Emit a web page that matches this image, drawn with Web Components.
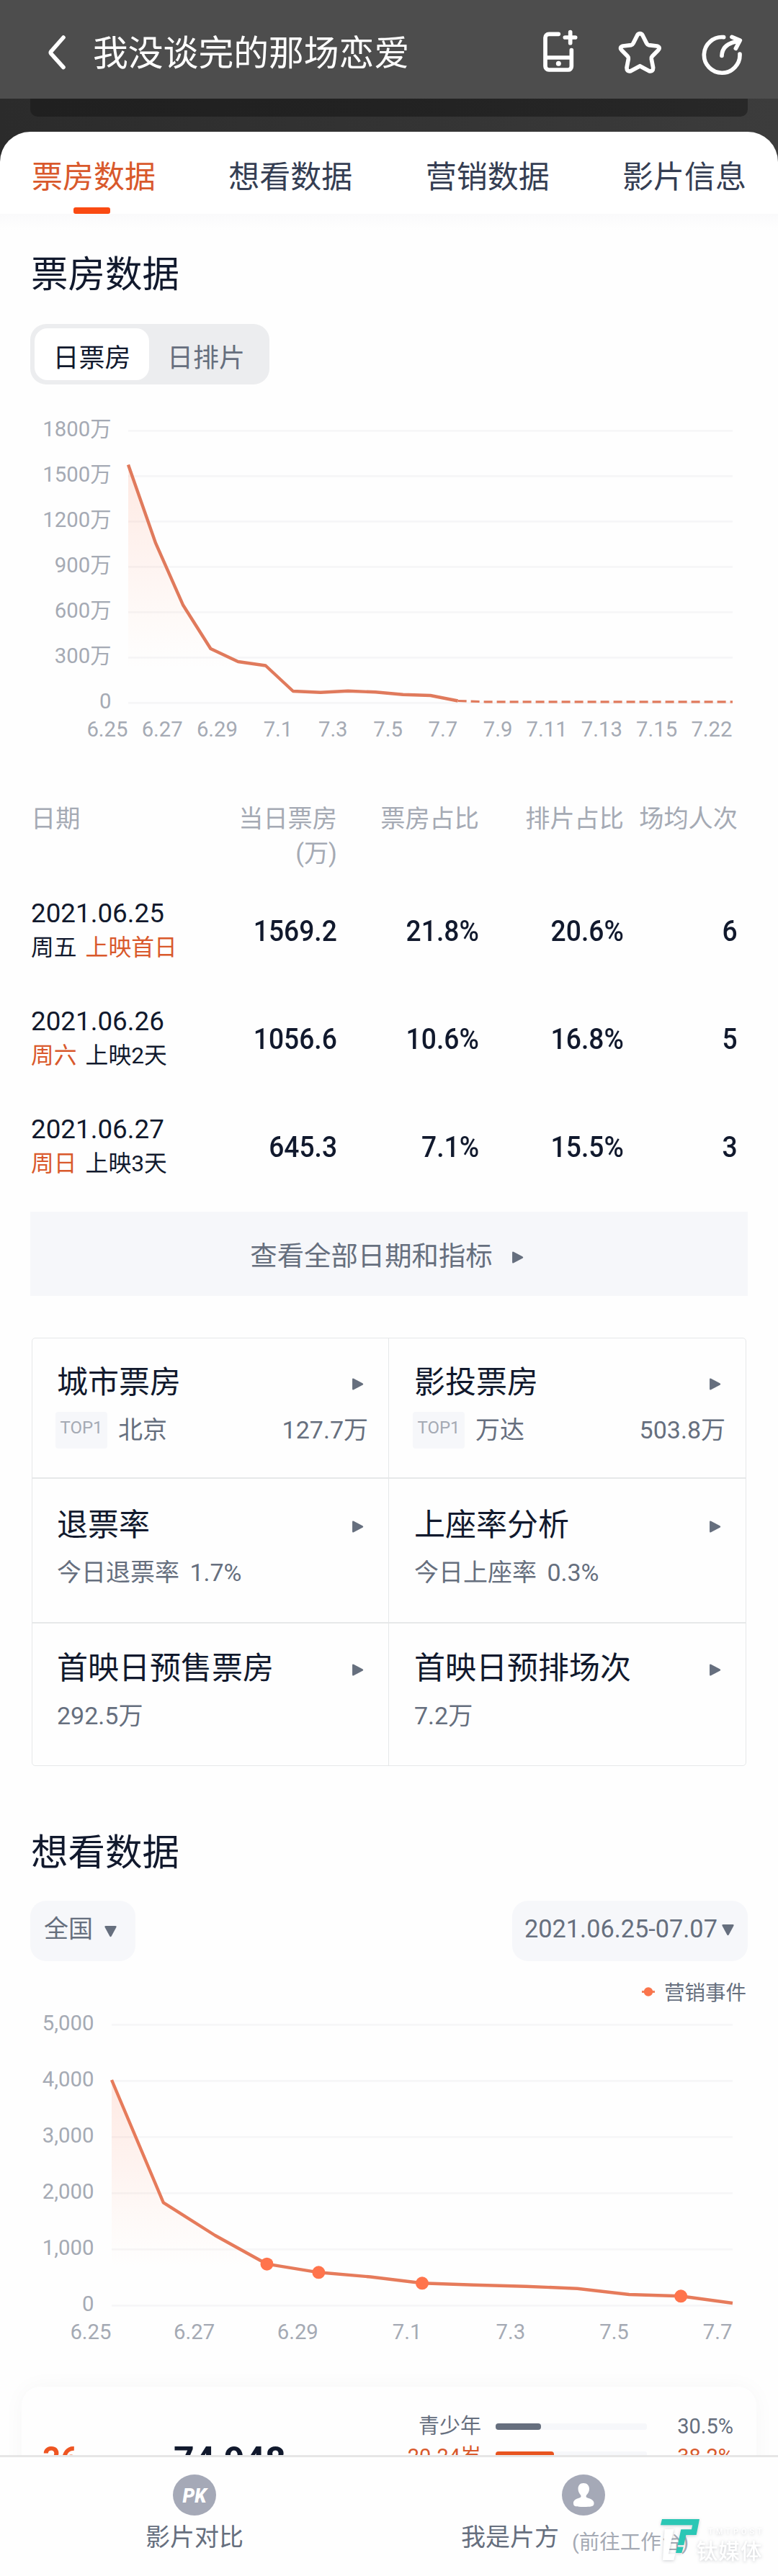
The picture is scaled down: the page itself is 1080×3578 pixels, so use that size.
<!DOCTYPE html>
<html lang="zh-CN">
<head>
<meta charset="utf-8">
<title>我没谈完的那场恋爱</title>
<style>
html,body{margin:0;padding:0}
body{width:1080px;background:#fefefe;font-family:Roboto,"Noto Sans CJK SC",sans-serif;color:#11192d;
--ink:#11192d;--sub:#666f7e;--mute:#a5aab4;--accent:#d9592c;--line:#e6e8e9;--soft:#f6f7fa}
</style>
</head>
<body>
<film-page></film-page>
<script>
const define=(name,html)=>customElements.define(name,class extends HTMLElement{
  connectedCallback(){
    if(this.shadowRoot)return;
    const t=document.createElement('template');
    t.innerHTML=typeof html==='function'?html(this):html;
    this.attachShadow({mode:'open'}).append(t.content.cloneNode(true));
  }
});

define('app-header',`<style>
:host{display:flex;height:137px;box-sizing:border-box;background:#4d4d4d;color:#fff;padding:40px 48px 0 64px}
.back{margin-top:7px}
h1{margin:1px 0 0 35px;font-weight:400;font-size:48.800px;line-height:68px;flex:1;white-space:nowrap}
.icons{display:flex;gap:52px;align-items:flex-start}
svg{display:block;fill:none;stroke:#fff;stroke-linecap:round;stroke-linejoin:round}
</style>
<svg class="back" width="30" height="52" viewBox="0 0 30 52" stroke-width="5.6"><path d="M24 5 7 24.3Q5.6 26 7 27.7L24 46.500"/></svg>
<h1><slot></slot></h1>
<div class="icons">
<svg width="52" height="62" viewBox="36 30 156 186" stroke-width="17"><path d="M106 52H66a15 15 0 0 0-15 15V186a15 15 0 0 0 15 15H146a14 14 0 0 0 14-14V119M51 150H160M155 44V89M133 66H176"/><circle cx="106" cy="175" r="10.500" fill="#fff" stroke="none"/></svg>
<svg width="64" height="64" viewBox="348 30 192 192" stroke-width="17"><path d="M445 50Q452 50 456 57L473 91Q476 97 482 98L516 102Q532 107 521 119L496 145Q492 149 493 156L500 192Q500 210 484 206L445 185 406 206Q390 210 390 192L397 156Q398 149 394 145L369 119Q358 107 374 102L408 98Q414 97 417 91L434 57Q438 50 445 50Z"/></svg>
<svg width="60" height="62" viewBox="696 42 180 186" stroke-width="17" style="margin-top:4px"><path d="M794 65A74.500 74.500 0 1 0 861 135M786 142Q788 92 852 82M828 64 862 78 844 112"/></svg>
</div>`);

define('hero-strip',`<style>
:host{display:block;height:46px;padding:0 42px}
div{height:25px;border-radius:0 0 10px 10px;background:linear-gradient(90deg,#202020,#222 50%,#282828)}
</style><div></div>`);

define('tab-bar',`<style>
:host{display:block;height:114px;box-sizing:border-box;padding:30px 44px 0;border-radius:42px 42px 0 0;background:#fff}
nav{display:flex;justify-content:space-between;font-size:43px;line-height:66px;color:#353e53}
span{display:flex;flex-direction:column;align-items:center;gap:9px}
.on{color:var(--accent)}
.on i{width:51px;height:9px;margin-right:5px;border-radius:3px;background:#fa4a12}
</style><nav><span class="on">票房数据<i></i></span><span>想看数据</span><span>营销数据</span><span>影片信息</span></nav>`);

define('section-title',`<style>
:host{display:block;padding-left:43px;font-size:51.500px;line-height:66px;color:var(--ink)}
</style><slot></slot>`);

define('seg-toggle',`<style>
:host{display:flex;width:332px;height:84px;box-sizing:border-box;margin-left:42px;padding:6px;border-radius:22px;background:#ecedef;font-size:36px;color:var(--sub)}
b,span{font-weight:400;line-height:84px}
b{width:159px;height:72px;border-radius:18px;background:#fff;color:var(--ink);text-align:center}
span{margin-left:25px}
</style><b>日票房</b><span>日排片</span>`);

const charts={
  box:{top:560,h:490,x0:178,xl:154.5,base:976.3,step:63,rows:['1800万','1500万','1200万','900万','600万','300万','0'],
    xs:['6.25','6.27','6.29','7.1','7.3','7.5','7.7','7.9','7.11','7.13','7.15','7.22'],ly:1012.5,
    n:22,y:[645.5,754.4,840.8,901,919,924.5,960,961.8,959.7,961.3,964.8,966,973.5],dash:[973.5,974.8],dots:[],color:'#e07a5c',fade:930},
  want:{top:2788,h:482,x0:155,xl:130.5,base:3202.3,step:78,rows:['5,000','4,000','3,000','2,000','1,000','0'],
    xs:['6.25','6.27','6.29','7.1','7.3','7.5','7.7'],ly:3238.7,
    n:12,y:[2889,3059.3,3105,3144.7,3156.3,3162.5,3171.3,3173.7,3175.7,3178.7,3187,3189.3,3199],dots:[3,4,6,11],color:'#e67b5b',fade:3150}
};
define('trend-chart',el=>{
  const c=charts[el.getAttribute('kind')],W=1017-c.x0,X=i=>c.x0+W*i/c.n,k=c.rows.length-1;
  const grid=c.rows.map((t,i)=>{const y=c.base-c.step*(k-i);
    return `<path d="M${c.x0} ${y}H1017" stroke="#f6f6f7" stroke-width="2.800"/><text x="${c.xl}" y="${y+8}">${t}</text>`}).join('');
  const xs=c.xs.map((t,i)=>`<text x="${c.x0-.5+W*i/(c.xs.length-1)}" y="${c.ly+10.5}">${t}</text>`).join('');
  const pts=c.y.map((y,i)=>X(i).toFixed(1)+' '+y).join('L');
  const last=X(c.y.length-1);
  const dash=c.dash?`<path d="M${last} ${c.dash[0]}L${X(13)} ${c.dash[1]}H1017" fill="none" stroke="${c.color}" stroke-width="3.200" stroke-dasharray="12 6"/>`:'';
  return `<style>:host{display:block;height:${c.h}px}svg{display:block}text{font-size:29.300px;fill:var(--mute);text-anchor:end}</style>
<svg width="1080" height="${c.h}" viewBox="0 ${c.top} 1080 ${c.h}">
<defs><linearGradient id="g" gradientUnits="userSpaceOnUse" x1="0" x2="0" y1="${c.y[0]}" y2="${c.fade}"><stop stop-color="#ff6a3c" stop-opacity=".14"/><stop offset=".55" stop-color="#ff6a3c" stop-opacity=".06"/><stop offset="1" stop-color="#ff8a4c" stop-opacity="0"/></linearGradient></defs>
${grid}${xs}<path d="M${pts}V${c.base}H${c.x0}Z" fill="url(#g)"/>
<path d="M${pts}" fill="none" stroke="${c.color}" stroke-width="4.400" stroke-linejoin="round"/>${dash}
${c.dots.map(i=>`<circle cx="${X(i)}" cy="${c.y[i]}" r="9" fill="#ff744c"/>`).join('')}</svg>`;
});

define('box-table',`<style>
:host{display:block;padding:0 56px 0 43px}
.row{display:grid;grid-template-columns:225px 200px 197px 201px 158px;align-items:center}
.head{font-size:34.200px;line-height:48px;color:var(--mute);align-items:start;height:99px;margin:-1px 0 7px;white-space:nowrap}
.head>*:not(:first-child),.v{text-align:right}
.body{height:150px}
.date{font-size:36.800px;line-height:46px;padding-top:1px}
.day{display:flex;gap:12px;font-size:31.800px;line-height:46px;padding:1px 0 4px;white-space:nowrap}
.day .o{color:var(--accent)}
.v{font-size:40px;line-height:60px;font-weight:500}
.v span{display:inline-block;transform:scaleX(.93);transform-origin:right}
</style>
<div class="row head"><div>日期</div><div>当日票房<br>(万)</div><div>票房占比</div><div>排片占比</div><div>场均人次</div></div>`+
[['2021.06.25','<span>周五</span><span class="o">上映首日</span>','1569.2','21.8%','20.6%','6'],
['2021.06.26','<span class="o">周六</span><span>上映2天</span>','1056.6','10.6%','16.8%','5'],
['2021.06.27','<span class="o">周日</span><span>上映3天</span>','645.3','7.1%','15.5%','3']].map(r=>`<div class="row body"><div><div class="date">${r[0]}</div><div class="day">${r[1]}</div></div>${r.slice(2).map(v=>`<div class="v"><span>${v}</span></div>`).join('')}</div>`).join(''));

define('tri-mark',`<style>:host{display:block;width:17px;height:17px}svg{display:block}:host([down]) svg{transform:rotate(90deg)}</style>
<svg width="17" height="17" viewBox="0 0 16 16"><path d="M1 1.600Q1 -.2 2.800 .6L14.400 6.800Q16.200 8 14.400 9.200L2.800 15.400Q1 16.200 1 14.400Z" fill="#666f7e"/></svg>`);

define('more-button',`<style>
:host{display:flex;align-items:center;justify-content:center;gap:26px;margin:0 42px;height:117px;box-sizing:border-box;padding-right:6px;background:var(--soft);font-size:37.400px;line-height:60px;color:var(--sub)}
tri-mark{margin-top:10px}span{padding-top:6px}
</style><span><slot></slot></span><tri-mark></tri-mark>`);

define('metric-cell',el=>`<style>
:host{display:block;box-sizing:border-box;padding:31px 28px 0 34px}
.t{display:flex;justify-content:space-between;align-items:center;font-size:43px;line-height:60px;color:var(--ink);white-space:nowrap}
tri-mark{margin:4px 6px 0 0}
.s{display:flex;align-items:flex-start;margin-top:${el.hasAttribute('tag')?11:8}px;font-size:34px;word-spacing:6px;line-height:${el.hasAttribute('tag')?51:56}px;color:var(--sub)}
.tag{width:72px;height:51px;border-radius:4px;background:var(--soft);color:var(--mute);font-size:24px;line-height:44px;text-align:center;margin:0 15px 0 -2px}
.n{margin-left:auto}
</style><div class="t"><span>${el.getAttribute('name')}</span><tri-mark></tri-mark></div>
<div class="s">${el.hasAttribute('tag')?`<span class="tag">${el.getAttribute('tag')}</span>`:''}<slot></slot>${el.hasAttribute('num')?`<span class="n">${el.getAttribute('num')}</span>`:''}</div>`);

define('metric-grid',`<style>
:host{display:grid;margin:0 44px;height:595px;box-sizing:border-box;border:1.500px solid var(--line);border-radius:5px;grid-template-columns:495px 1fr;grid-template-rows:195px 201px 1fr}
metric-cell:nth-of-type(odd){border-right:1px solid var(--line)}
metric-cell:nth-of-type(even){padding-left:35px}
metric-cell{border-bottom:2px solid var(--line)}
metric-cell:nth-last-child(-n+2){border-bottom:0}
metric-cell:nth-of-type(n+3){padding-top:34px}
metric-cell:nth-of-type(n+5){padding-top:32px}
</style>
<metric-cell name="城市票房" tag="TOP1" num="127.7万">北京</metric-cell>
<metric-cell name="影投票房" tag="TOP1" num="503.8万">万达</metric-cell>
<metric-cell name="退票率">今日退票率 1.7%</metric-cell>
<metric-cell name="上座率分析">今日上座率 0.3%</metric-cell>
<metric-cell name="首映日预售票房">292.5万</metric-cell>
<metric-cell name="首映日预排场次">7.2万</metric-cell>`);

define('filter-row',`<style>
:host{display:flex;justify-content:space-between;padding:0 42px}
div{display:flex;height:84px;box-sizing:border-box;border-radius:22px;background:var(--soft);color:var(--sub);font-size:34px;line-height:78px}
.l{width:146px;padding-left:19px;gap:16px}.r{width:327px;padding-left:17px;gap:6px;font-size:34.300px}
.l tri-mark{margin-top:34px}.r tri-mark{margin-top:32px}
</style><div class="l"><span>全国</span><tri-mark down></tri-mark></div><div class="r"><span>2021.06.25-07.07</span><tri-mark down></tri-mark></div>`);

define('event-legend',`<style>
:host{display:flex;justify-content:flex-end;gap:13px;height:40px;padding-right:44px;font-size:28.500px;line-height:41px;color:var(--sub)}
</style><svg width="18" height="38" viewBox="0 0 18 38"><path d="M0 18.500H18" stroke="#f0835f" stroke-width="3"/><circle cx="9" cy="18.500" r="6.200" fill="#fb744b"/></svg><span>营销事件</span>`);

define('age-card',`<style>
:host{display:block;height:140px;box-sizing:border-box;overflow:hidden;padding:45px 30px 0}
.card{display:flex;height:260px;border-radius:26px;background:#fefefe;box-shadow:0 0 30px rgba(30,30,40,.035)}
.big{font-size:50px;line-height:58px;font-weight:700;padding-top:73px;flex:none;box-sizing:border-box}
.a{width:211px;padding-left:29px;color:#ee5522}.b{width:325px;color:var(--ink)}
.a span{display:inline-block;transform:scaleX(.87);transform-origin:left}
.list{width:452px;padding-top:34px;flex:none}
.r{display:grid;grid-template-columns:102px 210px 1fr;column-gap:20px;align-items:center;height:42px;font-size:29px;line-height:42px;color:var(--sub);white-space:nowrap}
.r>:first-child,.r>:last-child{text-align:right}
.r>:first-child{margin-left:-40px}
i{display:block;height:9px;border-radius:3px;background:#f6f7fa}
i b{display:block;height:100%;border-radius:4px;width:63px;background:#666f7e}
.o{color:var(--accent)}.o i{height:15px}.o b{width:81px;background:#e8541f}
</style><div class="card"><div class="big a"><span>36</span></div><div class="big b">74,948</div>
<div class="list"><div class="r"><span>青少年</span><i><b></b></i><span>30.5%</span></div><div class="r o"><span>20-24岁</span><i><b></b></i><span>38.2%</span></div></div></div>`);

define('brand-mark',`<style>
:host{display:block;width:146px;height:66px}svg{display:block;overflow:visible;filter:drop-shadow(0 1px 2px rgba(90,95,110,.3))}
</style><svg width="146" height="66" viewBox="405 228 438 198">
<path d="M428 279H466L444 382H472L466 408H420Z" fill="#fff"/>
<path d="M417 237H573L560 303H517L508 345H482L496 280H540L544 262H411ZM480 353H506L499 378H474Z" fill="#2bc7b5"/>
<text x="610" y="301" font-size="32" font-weight="500" textLength="223" fill="#fff">TMTPOST</text>
<text x="560" y="402" font-size="89" font-weight="500" textLength="273" fill="#fff">钛媒体</text></svg>`);

define('bottom-bar',`<style>
:host{display:flex;height:168px;box-sizing:border-box;border-top:3px solid #e6e6e6;background:#fefefe;position:relative;color:var(--sub)}
.i{flex:1;display:flex;flex-direction:column;align-items:center;padding-top:24px;font-size:34px;line-height:50px;white-space:nowrap}
svg{display:block;margin-bottom:5px}
.p{display:flex;width:340px}.p small{font-size:28.500px;line-height:66px;color:var(--mute);margin-left:18px}
brand-mark{position:absolute;left:915px;top:83px}
</style>
<div class="i"><svg width="60" height="57" viewBox="0 0 60 57"><ellipse cx="30" cy="28.500" rx="30" ry="28.500" fill="#a5a9b7"/><text x="30" y="38.500" text-anchor="middle" font-size="28" font-weight="900" font-style="italic" fill="#fff" textLength="33" lengthAdjust="spacingAndGlyphs">PK</text></svg><span>影片对比</span></div>
<div class="i"><svg width="60" height="57" viewBox="0 0 60 57"><ellipse cx="30" cy="28.500" rx="30" ry="28.500" fill="#a5a9b7"/><path d="M30 12C25 12 22.500 15.500 22.500 20 22.500 24 24.500 26.500 26 28.500 27.200 31 26.500 32 23 33 18 34.500 15.500 37 16 40.500 16 44.500 20 45 30 45S44.500 44.500 44.500 40.500C45 37 42 34.500 37 33 33.500 32 33 31 34.200 28.500 36 26.500 38 24 38 20 38 15.500 35 12 30 12Z" fill="#fff"/></svg><div class="p"><span>我是片方</span><small>(前往工作台)</small></div></div>
<brand-mark></brand-mark>`);

define('film-page',`<style>
:host{display:block;width:1080px;height:3578px;overflow:hidden}
.top{background:linear-gradient(90deg,#2b2b2b,#333 50%,#3c3c3c)}
.shade{height:22px;background:linear-gradient(#fafafb,#fefefe)}
section-title{margin-top:30px}
.t2{margin-top:88px}
seg-toggle{margin-top:35px}
.c1{margin-top:26px}
box-table{margin-top:64px}
more-button{margin-top:14px}
metric-grid{margin-top:58px}
filter-row{margin-top:33px}
event-legend{margin-top:24px}
</style>
<app-header>我没谈完的那场恋爱</app-header>
<div class="top"><hero-strip></hero-strip><tab-bar></tab-bar></div>
<div class="shade"></div>
<section-title>票房数据</section-title>
<seg-toggle></seg-toggle>
<trend-chart class="c1" kind="box"></trend-chart>
<box-table style="display:flow-root"></box-table>
<more-button>查看全部日期和指标</more-button>
<metric-grid></metric-grid>
<section-title class="t2">想看数据</section-title>
<filter-row></filter-row>
<event-legend></event-legend>
<trend-chart kind="want"></trend-chart>
<age-card></age-card>
<bottom-bar></bottom-bar>`);
</script>
</body>
</html>
